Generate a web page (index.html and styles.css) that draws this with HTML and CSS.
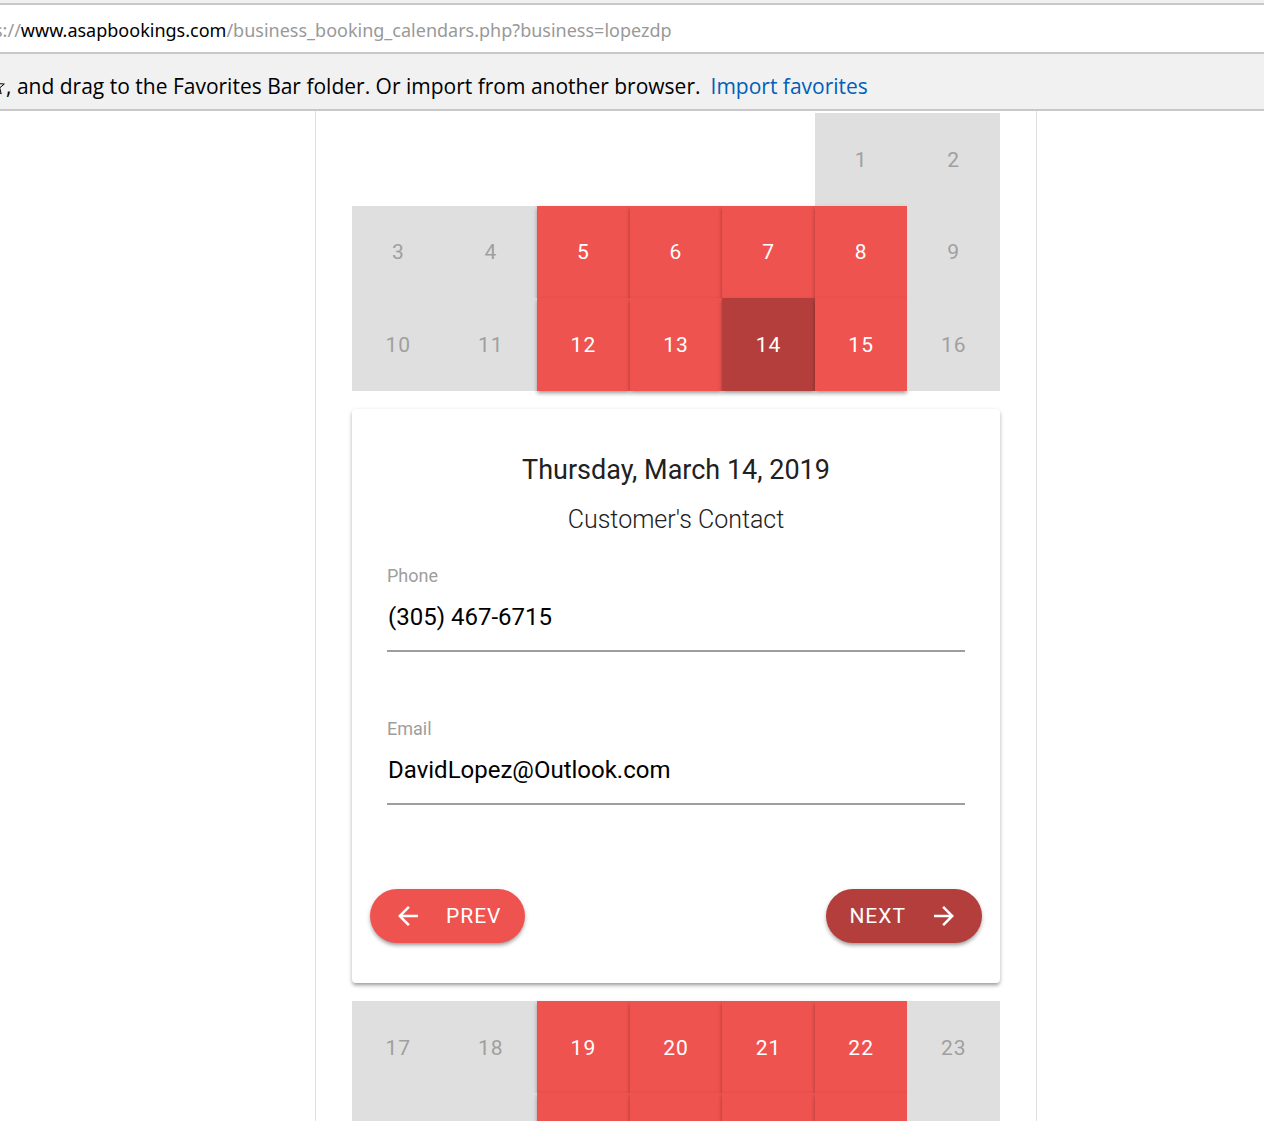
FILE: index.html
```
<!DOCTYPE html>
<html lang="en">
<head>
<meta charset="utf-8">
<title>Booking calendar</title>
<link rel="stylesheet" href="styles.css">
</head>
<body>
<header class="browser">
  <div class="address"><span>s://</span><span class="host">www.asapbookings.com</span><span>/business_booking_calendars.php?business=lopezdp</span></div>
  <div class="favorites">
    <svg class="star" viewBox="0 0 20 20" aria-hidden="true"><path d="M10 2l2.300 5.600 6 .4-4.600 3.900 1.500 5.900L10 14.500l-5.200 3.300 1.500-5.900L1.700 8l6-.4z"/></svg>
    <p>, and drag to the Favorites Bar folder. Or import from another browser.</p>
    <a href="#">Import favorites</a>
  </div>
</header>
<main class="page">
  <section class="panel">
    <div class="week-grid">
      <button class="day first" disabled>1</button><button class="day" disabled>2</button>
      <button class="day" disabled>3</button><button class="day" disabled>4</button><button class="day open">5</button><button class="day open">6</button><button class="day open">7</button><button class="day open">8</button><button class="day" disabled>9</button>
      <button class="day" disabled>10</button><button class="day" disabled>11</button><button class="day open">12</button><button class="day open">13</button><button class="day open selected">14</button><button class="day open">15</button><button class="day" disabled>16</button>
    </div>
    <form class="card">
      <h1>Thursday, March 14, 2019</h1>
      <h2>Customer's Contact</h2>
      <div class="field">
        <label for="phone">Phone</label>
        <input id="phone" type="tel" value="(305) 467-6715">
      </div>
      <div class="field">
        <label for="email">Email</label>
        <input id="email" type="email" value="DavidLopez@Outlook.com">
      </div>
      <div class="actions">
        <button class="pill" type="button"><svg viewBox="0 0 24 24" aria-hidden="true"><path d="M20 11H7.830l5.590-5.590L12 4l-8 8 8 8 1.410-1.410L7.830 13H20v-2z"/></svg>PREV</button>
        <button class="pill next" type="button">NEXT<svg viewBox="0 0 24 24" aria-hidden="true"><path d="M12 4l-1.410 1.410L16.170 11H4v2h12.170l-5.580 5.590L12 20l8-8z"/></svg></button>
      </div>
    </form>
    <div class="week-grid">
      <button class="day" disabled>17</button><button class="day" disabled>18</button><button class="day open">19</button><button class="day open">20</button><button class="day open">21</button><button class="day open">22</button><button class="day" disabled>23</button>
      <button class="day" disabled aria-label="24"></button><button class="day" disabled aria-label="25"></button><button class="day open" aria-label="26"></button><button class="day open" aria-label="27"></button><button class="day open" aria-label="28"></button><button class="day open" aria-label="29"></button><button class="day" disabled aria-label="30"></button>
    </div>
  </section>
</main>
</body>
</html>
```
FILE: styles.css
```
* { box-sizing: border-box; }

body {
  margin: 0;
  height: 100vh;
  display: flex;
  flex-direction: column;
  overflow: hidden;
  background: #fff;
  color: #212121;
  font-family: Roboto, sans-serif;
}

/* Browser chrome */
.browser {
  flex: none;
  padding-top: 3px;
  background: #f1f1f1;
  border-bottom: 2px solid #c8c8c8;
  font-family: "Open Sans", "Noto Sans", sans-serif;
  white-space: nowrap;
}

.address {
  height: 51px;
  border: solid #c8c8c8;
  border-width: 2px 0;
  text-indent: -6px;
  background: #fff;
  color: #999;
  font-family: "Noto Sans", "Open Sans", sans-serif;
  font-size: 18px;
  line-height: 50px;
}
.address .host { color: #000; }

.favorites {
  display: flex;
  align-items: center;
  height: 55px;
  padding-top: 8px;
  color: #000;
  font-size: 21px;
}
.favorites p { margin: 0 10px 0 0; }
.favorites a { color: #005fb8; text-decoration: none; }
.star {
  flex: none;
  width: 20px;
  height: 20px;
  margin-left: -14px;
  fill: none;
  stroke: #000;
  stroke-width: 1;
}

/* Calendar */
.page {
  flex: 1;
  min-height: 0;
  padding-left: 88px;
  overflow: hidden;
}
.panel {
  max-width: 722px;
  margin: 0 auto;
  padding: 2px 36px 36px;
  border: solid #dfdfdf;
  border-width: 0 1px;
}
.week-grid {
  display: grid;
  grid-template-columns: repeat(7, 1fr);
}
.day {
  aspect-ratio: 1;
  min-width: 0;
  padding: 1px 0 0;
  border: 0;
  background: #dfdfdf;
  color: #9f9f9f;
  font: 400 21px/24px Roboto, sans-serif;
  letter-spacing: 1px;
}
.first { grid-column-start: 6; }
.day.open {
  background: #ef5350;
  color: #fff;
  box-shadow: 0 3px 3px 0 rgba(0, 0, 0, .14), 0 4px 2px -3px rgba(0, 0, 0, .12), 0 2px 5px 0 rgba(0, 0, 0, .2);
}
.day.selected { background: #b33e3b; }

.card {
  margin: 18px 0;
  padding: 36px 18px 40px;
  border-radius: 4px;
  background: #fff;
  box-shadow: 0 3px 3px 0 rgba(0, 0, 0, .14), 0 4px 2px -3px rgba(0, 0, 0, .12), 0 2px 5px 0 rgba(0, 0, 0, .2);
}
.card h1,
.card h2 {
  margin: 0;
  text-align: center;
}
.card h1 { font-size: 27px; line-height: 50px; font-weight: 400; }
.card h2 { font-size: 25px; line-height: 50px; font-weight: 300; }

.field {
  height: 153px;
  margin: 0 17px;
  padding-top: 20px;
}
.field label {
  display: block;
  color: #9e9e9e;
  font-size: 18px;
  line-height: 22px;
}
.field input {
  display: block;
  width: 100%;
  height: 65px;
  padding: 0 1px 3px;
  border: 0;
  border-bottom: 2px solid #9e9e9e;
  outline: 0;
  background: transparent;
  color: #000;
  font: 400 24px/28px Roboto, sans-serif;
}

.actions {
  display: flex;
  justify-content: space-between;
  margin-top: 38px;
}
.pill {
  display: flex;
  align-items: center;
  gap: 23px;
  height: 54px;
  padding: 0 23px;
  border: 0;
  border-radius: 27px;
  background: #ef5350;
  color: #fff;
  font: 400 21px/24px Roboto, sans-serif;
  letter-spacing: 1px;
  box-shadow: 0 3px 3px 0 rgba(0, 0, 0, .14), 0 4px 2px -3px rgba(0, 0, 0, .12), 0 2px 5px 0 rgba(0, 0, 0, .2);
}
.pill.next { background: #b33e3b; }
.pill svg {
  width: 30px;
  height: 30px;
  fill: currentColor;
}
```
